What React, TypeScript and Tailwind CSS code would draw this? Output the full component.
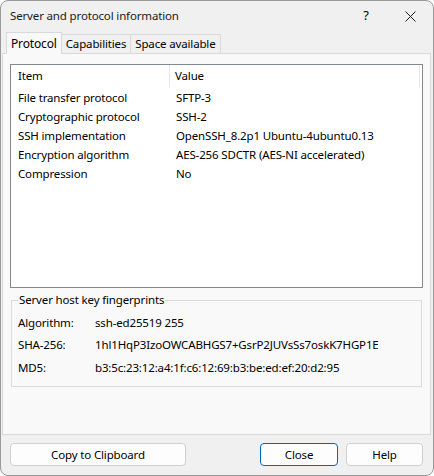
const rows = [
  ['File transfer protocol', 'SFTP-3'],
  ['Cryptographic protocol', 'SSH-2'],
  ['SSH implementation', 'OpenSSH_8.2p1 Ubuntu-4ubuntu0.13'],
  ['Encryption algorithm', 'AES-256 SDCTR (AES-NI accelerated)'],
  ['Compression', 'No'],
];

const fingerprints = [
  ['Algorithm:', 'ssh-ed25519 255'],
  ['SHA-256:', '1hl1HqP3IzoOWCABHGS7+GsrP2JUVsSs7oskK7HGP1E'],
  ['MD5:', 'b3:5c:23:12:a4:1f:c6:12:69:b3:be:ed:ef:20:d2:95'],
];

function Tab({ label, active }: { label: string; active?: boolean }) {
  if (active) {
    return (
      <div className="relative z-10 -mb-px flex h-[22px] items-center border border-b-0 border-[#d9d9d9] bg-[#f9f9f9] px-[4px] text-[12px]">
        {label}
      </div>
    );
  }
  return (
    <div className="mt-[2px] flex h-[19px] items-center border border-l-0 border-b-0 border-[#d9d9d9] bg-[#f0f0f0] px-[4px]">
      {label}
    </div>
  );
}

export default function App() {
  return (
    <div
      className="flex h-[476px] w-[434px] flex-col overflow-hidden rounded-[8px] border border-[#9a9a9a] bg-[#f0f0f0] text-[11.5px] tracking-[-0.15px] text-black"
      style={{ fontFamily: '"Noto Sans", "Open Sans", sans-serif' }}
    >
      {/* title bar */}
      <div className="flex h-[30px] shrink-0 items-center pl-[9px]">
        <div className="flex-1 text-[#1a1a1a]">Server and protocol information</div>
        <div className="w-[46px] pl-[4px] text-center text-[13px]">?</div>
        <div className="flex w-[46px] items-center justify-center">
          <svg width="11" height="11" viewBox="0 0 11 11" fill="none" stroke="#1a1a1a" strokeWidth="1">
            <path d="M0.5 0.5 L10.5 10.5 M10.5 0.5 L0.5 10.5" />
          </svg>
        </div>
      </div>

      {/* tabs */}
      <div className="flex h-[22px] shrink-0 items-end pl-[5px]">
        <Tab label="Protocol" active />
        <Tab label="Capabilities" />
        <Tab label="Space available" />
      </div>

      {/* tab panel */}
      <div className="ml-[1px] mr-[2px] flex h-[382px] shrink-0 flex-col border border-[#d9d9d9] bg-[#f9f9f9] px-[7px] pt-[10px]">
        <div className="flex h-[224px] shrink-0 flex-col border border-[#828790] bg-white">
          <div className="flex h-[22px] shrink-0 items-center">
            <div className="flex h-full w-[159px] items-center border-r border-[#e5e5e5] pl-[7px]">Item</div>
            <div className="flex h-full flex-1 items-center border-r border-[#e5e5e5] pl-[5px]">Value</div>
            <div className="w-[2px]" />
          </div>
          <div className="mt-[1px] flex flex-col">
            {rows.map(([k, v]) => (
              <div key={k} className="flex h-[19px] items-center">
                <div className="w-[165px] pl-[7px]">{k}</div>
                <div>{v}</div>
              </div>
            ))}
          </div>
        </div>

        <fieldset className="mx-[1px] mt-[4px] h-[95px] border border-[#dcdcdc] px-[6px]">
          <legend className="px-[1px] leading-[16px]">Server host key fingerprints</legend>
          <div className="mt-[3px] flex flex-col">
            {fingerprints.map(([k, v]) => (
              <div key={k} className="flex h-[22.5px] items-center">
                <div className="w-[77px]">{k}</div>
                <div>{v}</div>
              </div>
            ))}
          </div>
        </fieldset>
      </div>

      {/* buttons */}
      <div className="flex shrink-0 items-center pl-[9px] pr-[10px] pt-[8px]">
        <button className="h-[23px] w-[176px] rounded-[4px] border border-[#d0d0d0] bg-[#fdfdfd]">
          Copy to Clipboard
        </button>
        <div className="flex-1" />
        <button className="h-[23px] w-[78px] rounded-[4px] border border-[#0067c0] bg-[#fdfdfd]">Close</button>
        <button className="ml-[8px] h-[23px] w-[77px] rounded-[4px] border border-[#d0d0d0] bg-[#fdfdfd]">
          Help
        </button>
      </div>
    </div>
  );
}
